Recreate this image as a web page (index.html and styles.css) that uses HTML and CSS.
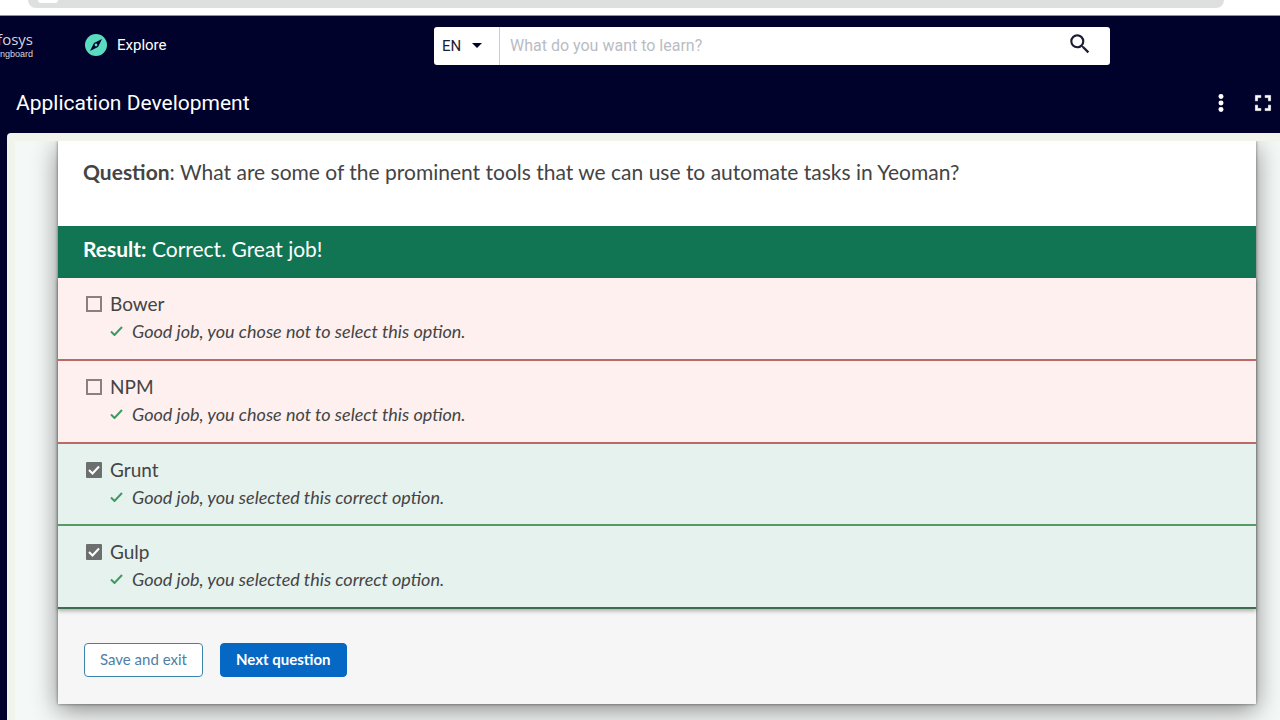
FILE: index.html
```
<!DOCTYPE html>
<html lang="en">
<head>
    <meta charset="UTF-8">
    <meta name="viewport" content="width=device-width, initial-scale=1">
    <title>Application Development</title>
    <link rel="stylesheet" href="styles.css">
</head>
<body>
    <div class="browser"><div class="address"><span class="address-icon"></span></div></div>
    <header class="topbar">
        <a class="logo" href="#">
            <span class="logo-name">fosys</span>
            <span class="logo-sub">ngboard</span>
        </a>
        <a class="explore" href="#">
            <svg width="22" height="22" viewBox="0 0 22 22">
                <circle cx="11" cy="11" r="11" fill="#5bdcc0"/>
                <path d="M17 5L13 13L5 17L9 9Z" fill="#01022b"/>
                <circle cx="11" cy="11" r="1.4" fill="#5bdcc0"/>
            </svg>
            Explore
        </a>
        <form class="search">
            <div class="lang">
                <select aria-label="Language">
                    <option>EN</option>
                </select>
                <svg width="10" height="5" viewBox="0 0 10 5"><path d="M0 0H10L5 5Z" fill="#01022b"/></svg>
            </div>
            <input type="text" placeholder="What do you want to learn?" aria-label="Search">
            <button type="button" class="search-btn" aria-label="Search">
                <svg width="26" height="26" viewBox="0 0 24 24"><path fill="#1c1d35" d="M15.5 14h-.79l-.28-.27A6.471 6.471 0 0 0 16 9.5 6.5 6.5 0 1 0 9.5 16c1.61 0 3.09-.59 4.23-1.57l.27.28v.79l5 4.99L20.49 19l-4.99-5zm-6 0C7.01 14 5 11.99 5 9.5S7.01 5 9.5 5 14 7.01 14 9.5 11.99 14 9.5 14z"/></svg>
            </button>
        </form>
    </header>
    <div class="titlebar">
        <h1>Application Development</h1>
        <button type="button" class="icon-btn" aria-label="More">
            <svg width="26" height="26" viewBox="0 0 24 24" fill="#fff"><circle cx="12" cy="6" r="2.3"/><circle cx="12" cy="12" r="2.3"/><circle cx="12" cy="18" r="2.3"/></svg>
        </button>
        <button type="button" class="icon-btn" aria-label="Full screen">
            <svg width="26" height="26" viewBox="0 0 24 24" fill="#fff"><path d="M7 14H5v5h5v-2H7v-3zm-2-4h2V7h3V5H5v5zm12 7h-3v2h5v-5h-2v3zM14 5v2h3v3h2V5h-5z" stroke="#fff" stroke-width=".6"/></svg>
        </button>
    </div>
    <div class="frame">
        <main class="viewer">
            <section class="card">
                <p class="question"><b>Question</b>: What are some of the prominent tools that we can use to automate tasks in Yeoman?</p>
                <p class="result"><b>Result:</b> Correct. Great job!</p>
                <ul class="options">
                    <li class="wrong">
                        <label><input type="checkbox">Bower</label>
                        <p class="feedback"><svg width="13" height="10" viewBox="0 0 13 10"><path d="M1 5.5L4.5 9L12 1"/></svg>Good job, you chose not to select this option.</p>
                    </li>
                    <li class="wrong">
                        <label><input type="checkbox">NPM</label>
                        <p class="feedback"><svg width="13" height="10" viewBox="0 0 13 10"><path d="M1 5.5L4.5 9L12 1"/></svg>Good job, you chose not to select this option.</p>
                    </li>
                    <li class="right">
                        <label><input type="checkbox" checked>Grunt</label>
                        <p class="feedback"><svg width="13" height="10" viewBox="0 0 13 10"><path d="M1 5.5L4.5 9L12 1"/></svg>Good job, you selected this correct option.</p>
                    </li>
                    <li class="right">
                        <label><input type="checkbox" checked>Gulp</label>
                        <p class="feedback"><svg width="13" height="10" viewBox="0 0 13 10"><path d="M1 5.5L4.5 9L12 1"/></svg>Good job, you selected this correct option.</p>
                    </li>
                </ul>
                <footer class="actions">
                    <button type="button" class="btn">Save and exit</button>
                    <button type="button" class="btn primary">Next question</button>
                </footer>
            </section>
        </main>
    </div>
</body>
</html>
```
FILE: styles.css
```
*{
    margin: 0;
    padding: 0;
    box-sizing: border-box;
}
body{
    display: flex;
    flex-direction: column;
    height: 100vh;
    overflow: hidden;
    background: #01022b;
    font-family: Lato, "Open Sans", sans-serif;
    color: #444;
}
svg{
    display: block;
    flex: none;
}
a{
    color: #fff;
    text-decoration: none;
}
button{
    border: 0;
    background: none;
    font: inherit;
    cursor: pointer;
}
.browser{
    height: 16px;
    padding: 0 56px 8px 28px;
    background: #fff;
    border-bottom: 1px solid #8d90a5;
}
.address{
    height: 8px;
    border-radius: 0 0 20px 20px;
    background: #dde0df;
}
.address-icon{
    display: block;
    width: 20px;
    height: 3px;
    margin-left: 10px;
    border-radius: 0 0 10px 10px;
    background: #fff;
}
/* header */
.topbar{
    display: flex;
    align-items: center;
    height: 58px;
    font-family: Roboto, sans-serif;
}
.logo{
    display: flex;
    flex-direction: column;
    align-items: flex-end;
    width: 33px;
    color: #d4d5df;
}
.logo-name{
    font: 15px/18px "Open Sans", sans-serif;
}
.logo-sub{
    font: 9px/12px "Liberation Sans Narrow", "Liberation Sans", sans-serif;
}
.explore{
    display: flex;
    align-items: center;
    gap: 10px;
    margin-left: 52px;
    font-size: 15px;
}
.search{
    display: flex;
    flex: 0 1 676px;
    height: 38px;
    margin: 1px 170px 0 auto;
    border-radius: 3px;
    background: #fff;
    overflow: hidden;
}
.lang{
    display: flex;
    align-items: center;
    width: 66px;
    padding: 0 17px 0 8px;
    border-right: 1px solid #ccc;
}
.lang select{
    flex: 1;
    width: 30px;
    border: 0;
    background: none;
    appearance: none;
    font: 15px Roboto, sans-serif;
    color: #1c1d35;
}
.search input{
    flex: 1;
    border: 0;
    padding: 0 10px;
    font: 16px Roboto, sans-serif;
}
.search input::placeholder{
    color: #b9bcc4;
}
.search-btn{
    padding: 4px 17px 8px;
}
.titlebar{
    display: flex;
    align-items: center;
    gap: 16px;
    height: 59px;
    padding: 0 4px 2px 16px;
    color: #fff;
}
.titlebar h1{
    flex: 1;
    font: 400 21px/28px Roboto, sans-serif;
}
/* course player */
.frame{
    flex: 1;
    min-height: 0;
    margin-left: 7px;
    padding: 8px 0 0 8px;
    border-radius: 4px 0 0 0;
    background: #f0f4ea;
}
.viewer{
    height: 100%;
    padding: 0 24px 0 43px;
    background: #f4f8f7;
    overflow: hidden;
}
.card{
    background: #f6f6f6;
    box-shadow: 0 0 3px rgba(0,0,0,.5), 0 6px 24px rgba(0,0,0,.45);
}
.question{
    padding: 17px 25px 40px;
    background: #fff;
    font-size: 21px;
    line-height: 28px;
}
.result{
    padding: 9px 25px 15px;
    background: #117554;
    color: #fff;
    font-size: 21px;
    line-height: 28px;
}
.options{
    list-style: none;
    box-shadow: 0 2px 4px rgba(0,0,0,.3);
}
.options li{
    padding: 12px 28px 15px;
    border-bottom: 2px solid #bb6a66;
    background: #fdf0ef;
}
.options .right{
    padding-bottom: 14px;
    border-color: #559a64;
    background: #e6f2ee;
}
.options .right:last-child{
    padding-bottom: 15px;
    border-color: #3f6c50;
}
.options label{
    display: flex;
    align-items: center;
    gap: 8px;
    font-size: 19px;
    line-height: 28px;
}
.options input{
    width: 16px;
    height: 16px;
    border: 2px solid #8a8081;
    appearance: none;
}
.options input:checked{
    border-radius: 1px;
    background: #6b6f6e url("data:image/svg+xml,%3Csvg xmlns='http://www.w3.org/2000/svg' viewBox='0 0 12 12'%3E%3Cpath d='M1 6L4.500 9.500L11 2.500' fill='none' stroke='%23fff' stroke-width='2'/%3E%3C/svg%3E") center / 12px no-repeat;
    border-color: #6b6f6e;
}
.feedback{
    display: flex;
    align-items: center;
    gap: 9px;
    padding-left: 24px;
    font-size: 18px;
    font-style: italic;
    line-height: 26px;
}
.feedback path{
    fill: none;
    stroke: #3c9a62;
    stroke-width: 2;
}
.actions{
    display: flex;
    gap: 17px;
    padding: 34px 26px 27px;
}
.btn{
    height: 34px;
    padding: 0 15px 2px;
    border: 1px solid #3d84ad;
    border-radius: 4px;
    background: #fff;
    color: #4e7fa5;
    font-size: 15px;
}
.primary{
    border-color: #0568c4;
    background: #0568c4;
    color: #fff;
    font-weight: 700;
}
```
